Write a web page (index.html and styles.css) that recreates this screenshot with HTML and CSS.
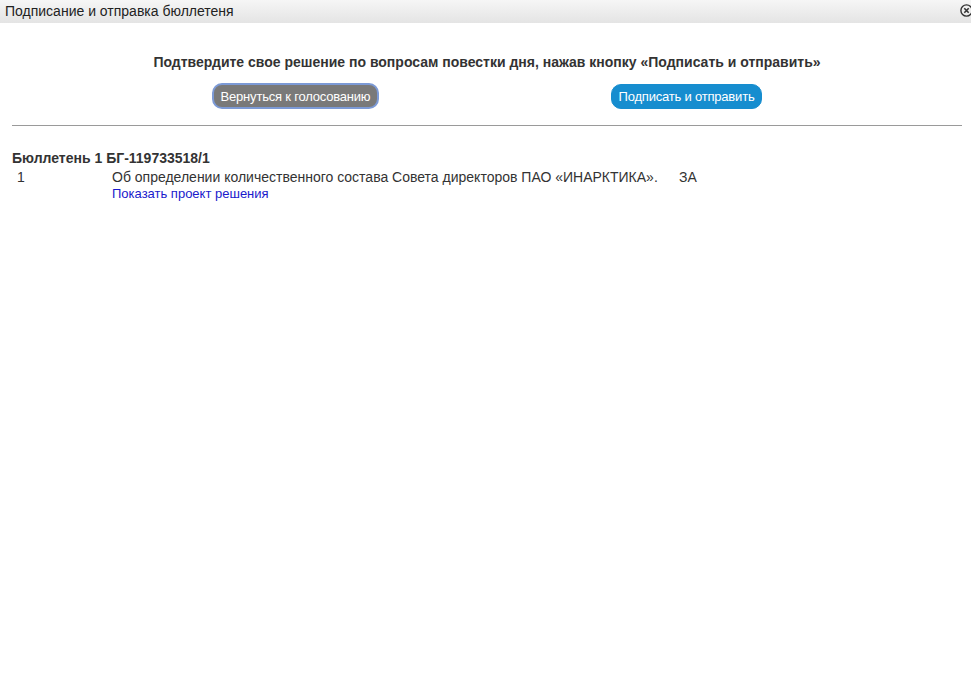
FILE: index.html
```html
<!DOCTYPE html>
<html lang="ru">
<head>
<meta charset="utf-8">
<title>Подписание и отправка бюллетеня</title>
<link rel="stylesheet" href="styles.css">
</head>
<body>
<div class="dialog">
  <div class="titlebar">
    <span class="title">Подписание и отправка бюллетеня</span>
    <span class="close" aria-label="Закрыть">
      <svg width="13" height="13" viewBox="0 0 13 13"><circle cx="6.5" cy="6.5" r="5.6" fill="none" stroke="#333" stroke-width="1.4"/><path d="M4.3 4.3 L8.7 8.7 M8.7 4.3 L4.3 8.7" stroke="#333" stroke-width="1.6"/></svg>
    </span>
  </div>
  <div class="content">
    <p class="prompt">Подтвердите свое решение по вопросам повестки дня, нажав кнопку «Подписать и отправить»</p>
    <div class="actions">
      <div class="cell"><button class="btn btn-back">Вернуться к голосованию</button></div>
      <div class="cell"><button class="btn btn-sign">Подписать и отправить</button></div>
    </div>
    <hr class="sep">
    <div class="bulletin">
      <div class="bulletin-title">Бюллетень 1 БГ-119733518/1</div>
      <div class="row">
        <div class="num">1</div>
        <div class="question">
          <div>Об определении количественного состава Совета директоров ПАО «ИНАРКТИКА».</div>
          <a class="link" href="#">Показать проект решения</a>
        </div>
        <div class="vote">ЗА</div>
      </div>
    </div>
  </div>
</div>
</body>
</html>
```
FILE: styles.css
```css
html, body {
  margin: 0;
  padding: 0;
  background: #fff;
}
body {
  font-family: "Liberation Sans", Arial, sans-serif;
  color: #333;
}
.dialog {
  width: 971px;
  height: 681px;
  overflow: hidden;
}
.titlebar {
  height: 23px;
  display: flex;
  align-items: center;
  justify-content: space-between;
  padding: 0 0 0 5px;
  background: linear-gradient(#f6f6f6, #e4e4e4);
}
.title {
  font-size: 14px;
  color: #222;
  margin-top: -2px;
}
.close {
  display: flex;
  width: 11px;
  overflow: hidden;
  margin-top: -2px;
}
.close svg {
  flex: none;
}
.content {
  padding: 0 9px 0 12px;
}
.prompt {
  margin: 31px 0 0;
  text-align: center;
  font-size: 14px;
  font-weight: bold;
  color: #333;
  line-height: 16px;
}
.actions {
  width: 782px;
  margin: 13px auto 0;
  display: flex;
  position: relative;
  left: 4px;
}
.cell {
  flex: 1;
  display: flex;
  justify-content: center;
}
.btn {
  font-family: "Liberation Sans", Arial, sans-serif;
  font-size: 13px;
  letter-spacing: -0.2px;
  color: #fff;
  height: 26px;
  border-radius: 10px;
  padding: 0 7px;
  cursor: pointer;
}
.btn-back {
  background: #797979;
  border: 2px solid #7c9ad6;
}
.btn-sign {
  background: #168dcf;
  border: 1px solid #168dcf;
  height: 25px;
  margin-top: 1px;
}
.sep {
  margin: 16px 0 0;
  border: 0;
  border-top: 1px solid #9a9a9a;
  height: 0;
}
.bulletin {
  margin-top: 24px;
  font-size: 14px;
  color: #333;
}
.bulletin-title {
  font-weight: bold;
  line-height: 16px;
}
.row {
  display: flex;
  line-height: 16px;
  margin-top: 3px;
}
.num {
  width: 100px;
  padding-left: 5px;
  box-sizing: border-box;
}
.question {
  width: 567px;
}
.link {
  color: #1a1acc;
  text-decoration: none;
  font-size: 13px;
}
.vote {
  width: 40px;
}
```
